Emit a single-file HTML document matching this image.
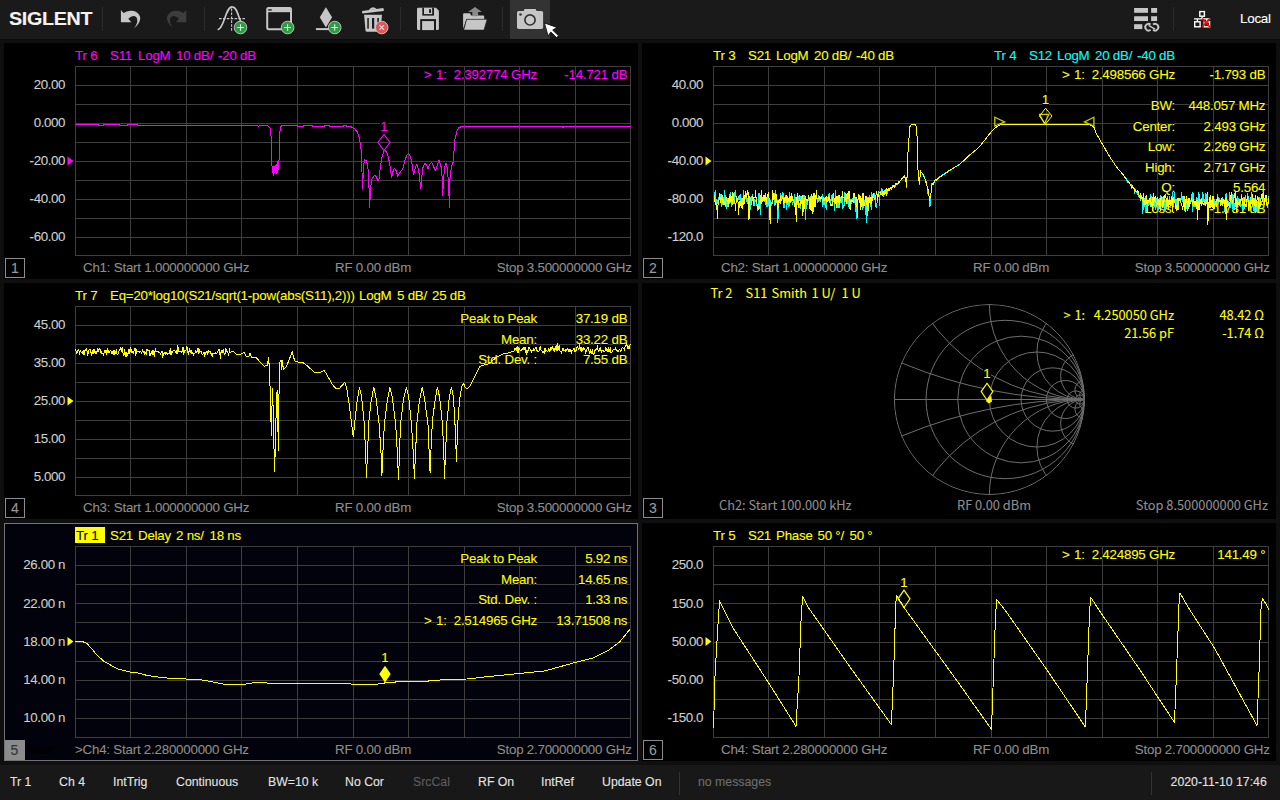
<!DOCTYPE html><html><head><meta charset="utf-8"><title>SIGLENT VNA</title><style>
*{box-sizing:border-box;margin:0;padding:0}
html,body{width:1280px;height:800px;overflow:hidden;background:#0f0f0f;}
body{font-family:"Liberation Sans",sans-serif;font-size:13.33px;letter-spacing:-0.22px;color:#ccc;position:relative;line-height:16px;-webkit-text-stroke:0.1px currentColor;}
#top{position:absolute;left:0;top:0;width:1280px;height:39px;background:#1a1a1a}
#status{position:absolute;left:0;top:765px;width:1280px;height:35px;background:#181818}
.p{position:absolute;background:#000;overflow:hidden}
.p svg{position:absolute;left:0;top:0}
.t{position:absolute;white-space:pre;height:16px;text-shadow:1px 0 #000,-1px 0 #000,0 1px #000,0 -1px #000}
.r{text-align:right}
.ml{background:#000;width:7.6px;height:15.4px;text-shadow:none;letter-spacing:0;overflow:hidden}
.num{position:absolute;left:1px;width:20px;height:20px;border:1px solid #8c8c8c;color:#9a9a9a;text-align:center;line-height:18px;font-size:14px;letter-spacing:0}
.ax{color:#cfcfcf;letter-spacing:-0.4px}
.bt{color:#8e8e8e}
.os{font-family:"Noto Sans CJK SC","DejaVu Sans",sans-serif;letter-spacing:0;font-size:12.8px}
.st{position:absolute;top:9px;color:#e4e4e4;white-space:pre;font-size:12.3px;letter-spacing:0}
</style></head><body>
<div id="top"><svg width="1280" height="39" viewBox="0 0 1280 39" style="position:absolute;left:0;top:0"><line x1="102.5" y1="7" x2="102.5" y2="31" stroke="#2b2b2b" stroke-width="1"/><line x1="204.5" y1="7" x2="204.5" y2="31" stroke="#2b2b2b" stroke-width="1"/><line x1="400.5" y1="7" x2="400.5" y2="31" stroke="#2b2b2b" stroke-width="1"/><line x1="502.5" y1="7" x2="502.5" y2="31" stroke="#2b2b2b" stroke-width="1"/><line x1="1173.5" y1="7" x2="1173.5" y2="31" stroke="#2b2b2b" stroke-width="1"/><rect x="510" y="0" width="40" height="39" fill="#333333"/><path d="M120.9,10 L120.9,22.2 L131.3,22.2 L128.3,18.7 Q132.8,14.4 136.4,17.2 Q139.2,21 134.2,28.3 Q141.6,21.5 140,16.4 Q137.6,10.6 130.6,10.8 Q126.2,11.2 123.6,13.1 Z" fill="#c6c6c6"/><g transform="translate(307.2,0) scale(-1,1)"><path d="M120.9,10 L120.9,22.2 L131.3,22.2 L128.3,18.7 Q132.8,14.4 136.4,17.2 Q139.2,21 134.2,28.3 Q141.6,21.5 140,16.4 Q137.6,10.6 130.6,10.8 Q126.2,11.2 123.6,13.1 Z" fill="#3d3d3d"/></g><path d="M218.4,29.4 C224.5,27.5 225.5,6.8 232,6.8 C237.5,6.8 238,17 241,22" fill="none" stroke="#c6c6c6" stroke-width="1.7" stroke-linecap="round"/><path d="M219,18.6 H245 M231.6,8.6 V32" fill="none" stroke="#c6c6c6" stroke-width="1.1" stroke-dasharray="2.6,1.3"/><circle cx="240.5" cy="27.5" r="6.3" fill="#2e9b45" stroke="#c9c9c9" stroke-width="0.9"/><path d="M237.2,27.5 L243.8,27.5 M240.5,24.2 L240.5,30.8" stroke="#e2efe4" stroke-width="1.05" fill="none"/><rect x="267.2" y="8" width="23.8" height="21.2" rx="1.6" fill="#1a1a1a" stroke="#c6c6c6" stroke-width="2"/><rect x="267" y="7.6" width="24.2" height="4.6" fill="#c6c6c6"/><rect x="268.2" y="9.2" width="3.6" height="1.4" fill="#222"/><circle cx="287.6" cy="27.5" r="6.3" fill="#2e9b45" stroke="#c9c9c9" stroke-width="0.9"/><path d="M284.3,27.5 L290.90000000000003,27.5 M287.6,24.2 L287.6,30.8" stroke="#e2efe4" stroke-width="1.05" fill="none"/><polygon points="325.9,7.2 332.1,17.3 325.9,27.6 319.8,17.3" fill="#c6c6c6"/><rect x="315.9" y="28.1" width="14" height="2" fill="#c6c6c6"/><circle cx="334.7" cy="27.5" r="6.3" fill="#2e9b45" stroke="#c9c9c9" stroke-width="0.9"/><path d="M331.4,27.5 L338.0,27.5 M334.7,24.2 L334.7,30.8" stroke="#e2efe4" stroke-width="1.05" fill="none"/><path d="M362.2,10.9 L383.2,8.1 Q384.3,9.5 383.7,10.9 L362.6,13.6 Q361.5,12.2 362.2,10.9 Z" fill="#c6c6c6"/><path d="M368.6,10.2 Q372.6,4.8 376.8,9.2 Z" fill="#c6c6c6"/><path d="M364.1,14.8 H382 L380.6,30.4 Q380.4,31.7 379,31.7 H367 Q365.7,31.7 365.5,30.4 Z" fill="#c6c6c6"/><rect x="367.3" y="18" width="1.5" height="10.6" fill="#1a1a1a"/><rect x="372" y="18" width="2.2" height="10.6" fill="#1a1a1a"/><rect x="377.3" y="18" width="1.6" height="10.6" fill="#1a1a1a"/><circle cx="381.7" cy="27.5" r="6.3" fill="#e05656" stroke="#c9c9c9" stroke-width="0.9"/><path d="M379.4,25.2 L384.0,29.8 M384.0,25.2 L379.4,29.8" stroke="#f4dcdc" stroke-width="1.1" fill="none"/><path d="M418.4,7.8 H436 L438.9,10.8 V28.8 Q438.9,30.1 437.6,30.1 H418.4 Q417,30.1 417,28.8 V9.2 Q417,7.8 418.4,7.8 Z" fill="#c6c6c6"/><rect x="422.3" y="7.8" width="11.7" height="7.8" fill="#1a1a1a"/><rect x="424" y="7.8" width="8.2" height="6.3" fill="#c6c6c6"/><rect x="429.1" y="9.2" width="1.9" height="3.7" fill="#1a1a1a"/><rect x="420.2" y="19.1" width="15.8" height="11" fill="#1a1a1a"/><rect x="422.1" y="21.1" width="11.9" height="9" fill="#c6c6c6"/><path d="M463.1,14.2 Q463.1,13.3 464,13.3 H470 L471.2,15.6 H483.4 Q484.2,15.6 484.2,16.4 V19 H466.4 L463.1,29 Z" fill="#c6c6c6"/><polygon points="466.6,19.3 487.1,19.3 484,30.1 463.7,30.1" fill="#c6c6c6" stroke="#1a1a1a" stroke-width="0.6"/><polygon points="475,6.9 482,11.9 478.1,11.9 478.1,16.2 472.3,16.2 472.3,11.9 468,11.9" fill="#8a8a8a"/><rect x="517" y="10.9" width="26.1" height="18" rx="1.6" fill="#c6c6c6"/><path d="M523.6,11 L524.6,9 H535.6 L536.6,11 Z" fill="#c6c6c6"/><circle cx="530" cy="19.9" r="5.1" fill="#c9c9c9" stroke="#333" stroke-width="1.7"/><circle cx="520.5" cy="14.5" r="1.3" fill="#333"/><polygon points="544.4,22.9 556.9,27.4 552.7,30.1 558.5,35.7 556.6,37.6 550.8,32 548.1,36" fill="#ffffff" stroke="#111" stroke-width="0.9" stroke-linejoin="round"/><rect x="1134.1" y="8" width="13.9" height="4.8" fill="#c6c6c6"/><rect x="1151.1" y="8" width="6" height="4.8" fill="#c6c6c6"/><rect x="1134.1" y="16.25" width="13.9" height="4.8" fill="#c6c6c6"/><rect x="1151.1" y="16.25" width="6" height="4.8" fill="#c6c6c6"/><rect x="1134.1" y="24.2" width="8.2" height="4.9" fill="#c6c6c6"/><path d="M1150.6,24.6 A3.3,3.3 0 1 0 1150.6,29.8 M1153,29.8 A3.3,3.3 0 1 0 1153,24.6" fill="none" stroke="#c6c6c6" stroke-width="1.9"/><path d="M1148.6,25.3 L1155,29.1" stroke="#c6c6c6" stroke-width="1.5"/><g fill="none" stroke="#ffffff" stroke-width="1.4"><rect x="1199.8" y="11.6" width="4.6" height="4.6"/><rect x="1194.7" y="21.8" width="5.4" height="5"/><rect x="1204.2" y="21.8" width="5.4" height="5"/><path d="M1202.1,16.4 V18.9 M1194,18.9 H1210.2 M1197.4,18.9 V21.6 M1206.9,18.9 V21.6"/></g><path d="M1202,18.6 L1210,27 M1210,18.6 L1202,27" stroke="#ff0000" stroke-width="1.8" fill="none"/></svg><div style="position:absolute;left:9px;top:7px;font-weight:bold;font-size:18px;line-height:24px;color:#f6f3ee;letter-spacing:-0.3px;transform:scaleX(1.095);transform-origin:0 0;white-space:pre">SIGLENT</div><div style="position:absolute;left:1240px;top:10.5px;font-size:13.33px;color:#ffffff;white-space:pre">Local</div></div><div style="position:absolute;left:0;top:39px;width:1280px;height:1px;background:#0b0b0b"></div>
<div class="p" style="left:4px;top:43px;width:634px;height:236px;background:#000;"><svg width="634" height="236" viewBox="0 0 634 236" style="left:0px;top:0px"><g fill="#3e3e3e"><rect x="71" y="23" width="1" height="190"/><rect x="126" y="23" width="1" height="190"/><rect x="182" y="23" width="1" height="190"/><rect x="237" y="23" width="1" height="190"/><rect x="293" y="23" width="1" height="190"/><rect x="349" y="23" width="1" height="190"/><rect x="404" y="23" width="1" height="190"/><rect x="460" y="23" width="1" height="190"/><rect x="515" y="23" width="1" height="190"/><rect x="571" y="23" width="1" height="190"/><rect x="626" y="23" width="1" height="190"/><rect x="71" y="23" width="556" height="1"/><rect x="71" y="42" width="556" height="1"/><rect x="71" y="61" width="556" height="1"/><rect x="71" y="80" width="556" height="1"/><rect x="71" y="99" width="556" height="1"/><rect x="71" y="118" width="556" height="1"/><rect x="71" y="137" width="556" height="1"/><rect x="71" y="156" width="556" height="1"/><rect x="71" y="175" width="556" height="1"/><rect x="71" y="194" width="556" height="1"/><rect x="71" y="212" width="556" height="1"/></g></svg><div style="position:absolute;left:0px;top:0px;width:634px;height:236px"><div class="t" style="top:5.4px;left:71.0px;color:#ff00ff;">Tr 6</div><div class="t" style="top:5.4px;left:106.0px;color:#ff00ff;">S11</div><div class="t" style="top:5.4px;left:134.0px;color:#ff00ff;">LogM</div><div class="t" style="top:5.4px;left:172.0px;color:#ff00ff;">10 dB/</div><div class="t" style="top:5.4px;left:214.0px;color:#ff00ff;">-20 dB</div><div class="t ax r" style="top:34.3px;right:573.0px;">20.00</div><div class="t ax r" style="top:72.3px;right:573.0px;">0.000</div><div class="t ax r" style="top:110.3px;right:573.0px;">-20.00</div><div class="t ax r" style="top:148.3px;right:573.0px;">-40.00</div><div class="t ax r" style="top:186.3px;right:573.0px;">-60.00</div><div class="t bt" style="top:217.4px;left:79.0px;">Ch1: Start 1.000000000 GHz</div><div class="t bt" style="top:217.4px;left:331.0px;">RF 0.00 dBm</div><div class="t bt r" style="top:217.4px;right:6.3px;">Stop 3.500000000 GHz</div><div class="t r" style="top:24.4px;right:101.0px;color:#ff00ff;"><span style="letter-spacing:0.9px">&gt;</span> 1:  2.392774 GHz</div><div class="t r" style="top:24.4px;right:10.7px;color:#ff00ff;">-14.721 dB</div><div class="t ml" style="left:376.2px;top:76.0px;color:#ff00ff">1</div><div class="num" style="top:215px">1</div></div><svg width="634" height="236" viewBox="0 0 634 236" style="left:0px;top:0px"><polyline points="71.0,81.5 94.0,81.5 94.5,82.5 99.0,82.5 99.5,81.5 115.0,81.5 115.5,82.5 123.0,82.5 123.5,81.5 133.0,81.5 133.8,83.0 134.6,82.5 253.5,82.5 254.3,83.6 255.2,82.5 262.5,82.5 264.5,83.2 266.0,85.0 266.8,88.0 267.4,102.0 267.6,120.5 268.4,125.0 268.9,129.0 269.5,132.6 270.0,123.0 270.6,130.0 271.2,122.0 271.8,129.0 272.4,121.0 273.0,130.5 273.6,120.0 274.2,117.0 274.7,127.0 275.1,115.0 275.4,104.0 275.8,92.0 276.2,84.5 277.5,82.8 279.0,82.5 293.5,82.5 294.0,83.5 299.5,83.5 300.0,82.5 308.0,82.5 308.5,83.5 320.0,83.5 321.0,82.5 325.0,82.5 326.0,83.5 339.0,83.5 340.0,82.5 342.0,82.5 343.0,83.5 346.6,83.5 350.4,85.6 353.5,89.2 355.4,95.0 356.2,100.0 357.2,107.0 357.8,122.0 358.5,145.8 359.1,133.0 359.6,122.0 360.8,116.8 362.6,118.0 364.4,128.0 365.0,145.0 365.6,164.8 366.2,153.0 366.8,143.5 368.0,136.3 370.3,132.2 372.1,133.4 373.9,137.5 375.0,136.3 376.3,124.5 378.0,113.8 380.4,107.3 382.8,109.0 384.6,115.0 386.4,125.7 387.8,134.6 388.7,129.2 390.5,125.1 392.3,128.0 393.8,133.4 395.9,129.8 398.8,125.7 400.6,118.5 402.7,112.6 404.4,110.2 406.5,113.8 408.3,122.1 409.5,131.6 411.0,125.7 412.8,121.5 414.6,126.9 416.0,138.7 416.9,145.8 417.8,134.0 419.0,124.5 420.8,120.3 422.6,122.1 424.0,125.7 425.8,121.5 427.7,119.1 429.7,123.9 431.5,127.4 433.2,122.7 435.0,117.4 436.8,121.5 438.0,132.8 438.6,153.0 439.8,132.8 440.7,123.3 442.1,120.3 443.6,126.9 444.8,148.2 445.5,164.8 446.0,136.3 446.9,128.0 448.3,120.9 449.5,118.5 450.5,98.4 452.0,92.4 453.4,86.5 455.2,84.4 458.2,83.5 466.0,83.4 558.0,83.4 559.0,84.5 560.0,83.4 627.0,83.4" fill="none" stroke="#ff00ff" stroke-width="1.0" stroke-linejoin="round" shape-rendering="crispEdges"/><polygon points="63.5,113.5 69.5,118.0 63.5,122.5" fill="#ff00ff"/><polygon points="380.0,107.5 386.0,99.5 380.0,91.5 374.0,99.5" fill="none" stroke="#ff00ff" stroke-width="1.2"/></svg></div>
<div class="p" style="left:642px;top:43px;width:634px;height:236px;background:#000;"><svg width="634" height="236" viewBox="0 0 634 236" style="left:0px;top:0px"><g fill="#3e3e3e"><rect x="71" y="23" width="1" height="190"/><rect x="126" y="23" width="1" height="190"/><rect x="182" y="23" width="1" height="190"/><rect x="237" y="23" width="1" height="190"/><rect x="293" y="23" width="1" height="190"/><rect x="349" y="23" width="1" height="190"/><rect x="404" y="23" width="1" height="190"/><rect x="460" y="23" width="1" height="190"/><rect x="515" y="23" width="1" height="190"/><rect x="571" y="23" width="1" height="190"/><rect x="626" y="23" width="1" height="190"/><rect x="71" y="23" width="556" height="1"/><rect x="71" y="42" width="556" height="1"/><rect x="71" y="61" width="556" height="1"/><rect x="71" y="80" width="556" height="1"/><rect x="71" y="99" width="556" height="1"/><rect x="71" y="118" width="556" height="1"/><rect x="71" y="137" width="556" height="1"/><rect x="71" y="156" width="556" height="1"/><rect x="71" y="175" width="556" height="1"/><rect x="71" y="194" width="556" height="1"/><rect x="71" y="212" width="556" height="1"/></g></svg><div style="position:absolute;left:0px;top:0px;width:634px;height:236px"><div class="t" style="top:5.4px;left:71.0px;color:#ffff00;">Tr 3</div><div class="t" style="top:5.4px;left:106.0px;color:#ffff00;">S21</div><div class="t" style="top:5.4px;left:134.0px;color:#ffff00;">LogM</div><div class="t" style="top:5.4px;left:172.0px;color:#ffff00;">20 dB/</div><div class="t" style="top:5.4px;left:214.0px;color:#ffff00;">-40 dB</div><div class="t" style="top:5.4px;left:352.0px;color:#00ffff;">Tr 4</div><div class="t" style="top:5.4px;left:387.0px;color:#00ffff;">S12</div><div class="t" style="top:5.4px;left:415.0px;color:#00ffff;">LogM</div><div class="t" style="top:5.4px;left:453.0px;color:#00ffff;">20 dB/</div><div class="t" style="top:5.4px;left:495.0px;color:#00ffff;">-40 dB</div><div class="t ax r" style="top:34.3px;right:573.0px;">40.00</div><div class="t ax r" style="top:72.3px;right:573.0px;">0.000</div><div class="t ax r" style="top:110.3px;right:573.0px;">-40.00</div><div class="t ax r" style="top:148.3px;right:573.0px;">-80.00</div><div class="t ax r" style="top:186.3px;right:573.0px;">-120.0</div><div class="t bt" style="top:217.4px;left:79.0px;">Ch2: Start 1.000000000 GHz</div><div class="t bt" style="top:217.4px;left:331.0px;">RF 0.00 dBm</div><div class="t bt r" style="top:217.4px;right:6.3px;">Stop 3.500000000 GHz</div><div class="t r" style="top:24.4px;right:101.0px;color:#ffff00;"><span style="letter-spacing:0.9px">&gt;</span> 1:  2.498566 GHz</div><div class="t r" style="top:24.4px;right:10.7px;color:#ffff00;">-1.793 dB</div><div class="t ml" style="left:399.8px;top:49.4px;color:#ffff00">1</div><div class="t r" style="top:55.4px;right:101.0px;color:#ffff00;">BW:</div><div class="t r" style="top:55.4px;right:10.7px;color:#ffff00;">448.057 MHz</div><div class="t r" style="top:76.4px;right:101.0px;color:#ffff00;">Center:</div><div class="t r" style="top:76.4px;right:10.7px;color:#ffff00;">2.493 GHz</div><div class="t r" style="top:96.4px;right:101.0px;color:#ffff00;">Low:</div><div class="t r" style="top:96.4px;right:10.7px;color:#ffff00;">2.269 GHz</div><div class="t r" style="top:117.4px;right:101.0px;color:#ffff00;">High:</div><div class="t r" style="top:117.4px;right:10.7px;color:#ffff00;">2.717 GHz</div><div class="t r" style="top:137.4px;right:101.0px;color:#ffff00;">Q:</div><div class="t r" style="top:137.4px;right:10.7px;color:#ffff00;">5.564</div><div class="t r" style="top:158.4px;right:101.0px;color:#ffff00;">Loss:</div><div class="t r" style="top:158.4px;right:10.7px;color:#ffff00;">-1.781 dB</div><div class="num" style="top:215px">2</div></div><svg width="634" height="236" viewBox="0 0 634 236" style="left:0px;top:0px"><polyline points="72.0,153.2 72.6,155.5 73.1,147.6 73.7,161.9 74.2,160.1 74.8,156.6 75.3,158.6 75.9,160.3 76.4,155.1 77.0,153.7 77.6,150.1 78.1,156.0 78.7,151.6 79.2,152.0 79.8,164.0 80.3,159.5 80.9,161.9 81.4,154.3 82.0,155.6 82.6,147.6 83.1,164.2 83.7,152.7 84.2,160.9 84.8,165.4 85.3,162.6 85.9,155.1 86.4,158.2 87.0,160.9 87.6,158.2 88.1,149.0 88.7,152.6 89.2,163.6 89.8,154.3 90.3,162.0 90.9,159.0 91.4,154.5 92.0,161.1 92.6,153.1 93.1,148.0 93.7,147.6 94.2,157.1 94.8,159.4 95.3,157.1 95.9,157.5 96.4,153.3 97.0,157.4 97.6,155.0 98.1,151.5 98.7,160.3 99.2,156.8 99.8,156.6 100.3,160.1 100.9,163.1 101.4,147.6 102.0,157.0 102.6,158.6 103.1,153.1 103.7,151.3 104.2,158.9 104.8,150.6 105.3,160.9 105.9,160.8 106.4,159.4 107.0,156.9 107.6,157.6 108.1,166.7 108.7,155.8 109.2,153.3 109.8,161.8 110.3,151.4 110.9,154.3 111.4,162.9 112.0,155.8 112.6,162.9 113.1,158.1 113.7,157.3 114.2,159.8 114.8,162.6 115.3,164.7 115.9,167.6 116.4,154.8 117.0,150.2 117.6,161.6 118.1,160.4 118.7,171.1 119.2,155.3 119.8,155.5 120.3,154.9 120.9,157.4 121.4,154.1 122.0,154.8 122.6,158.2 123.1,157.0 123.7,160.8 124.2,163.2 124.8,154.2 125.3,155.1 125.9,164.1 126.4,158.5 127.0,155.5 127.6,165.3 128.1,158.8 128.7,157.8 129.2,163.1 129.8,161.1 130.3,159.3 130.9,153.9 131.4,153.0 132.0,155.2 132.6,162.4 133.1,147.6 133.7,151.5 134.2,158.8 134.8,156.4 135.3,157.1 135.9,180.1 136.4,163.8 137.0,157.8 137.6,160.0 138.1,157.7 138.7,150.8 139.2,157.4 139.8,153.5 140.3,149.0 140.9,154.5 141.4,150.5 142.0,165.2 142.6,154.8 143.1,159.5 143.7,152.1 144.2,156.8 144.8,167.0 145.3,153.8 145.9,157.2 146.4,158.0 147.0,163.7 147.6,149.9 148.1,160.2 148.7,154.9 149.2,153.7 149.8,158.0 150.3,160.7 150.9,161.2 151.4,157.0 152.0,156.6 152.6,151.6 153.1,160.9 153.7,154.3 154.2,161.2 154.8,157.3 155.3,162.0 155.9,158.6 156.4,153.3 157.0,160.1 157.6,160.7 158.1,165.7 158.7,153.9 159.2,158.2 159.8,158.7 160.3,163.2 160.9,160.1 161.4,152.9 162.0,160.3 162.6,152.9 163.1,156.3 163.7,177.0 164.2,159.2 164.8,158.7 165.3,161.3 165.9,159.2 166.4,153.4 167.0,154.7 167.6,156.3 168.1,153.6 168.7,154.4 169.2,156.7 169.8,154.4 170.3,154.5 170.9,164.3 171.4,156.6 172.0,156.0 172.6,155.6 173.1,155.4 173.7,158.0 174.2,155.0 174.8,153.4 175.3,159.5 175.9,157.4 176.4,152.9 177.0,158.5 177.6,153.5 178.1,159.1 178.7,154.1 179.2,154.0 179.8,153.7 180.3,151.6 180.9,163.7 181.4,154.1 182.0,162.2 182.6,157.5 183.1,154.2 183.7,161.9 184.2,166.9 184.8,160.6 185.3,154.8 185.9,157.9 186.4,157.9 187.0,151.2 187.6,150.9 188.1,160.0 188.7,162.0 189.2,152.5 189.8,157.7 190.3,156.0 190.9,151.4 191.4,154.2 192.0,158.9 192.6,167.4 193.1,154.2 193.7,147.6 194.2,161.9 194.8,157.5 195.3,154.0 195.9,164.8 196.4,153.9 197.0,165.1 197.6,163.4 198.1,158.8 198.7,154.8 199.2,156.5 199.8,159.6 200.3,154.9 200.9,166.1 201.4,162.6 202.0,163.4 202.6,149.4 203.1,152.4 203.7,158.3 204.2,152.2 204.8,158.0 205.3,161.0 205.9,150.6 206.4,160.3 207.0,164.2 207.6,152.7 208.1,157.1 208.7,161.7 209.2,161.0 209.8,156.5 210.3,155.8 210.9,157.8 211.4,156.6 212.0,150.7 212.6,155.3 213.1,161.3 213.7,156.8 214.2,176.0 214.8,154.6 215.3,157.7 215.9,157.6 216.4,155.9 217.0,156.2 217.6,159.5 218.1,160.5 218.7,160.2 219.2,157.4 219.8,160.2 220.3,160.1 220.9,166.4 221.4,158.8 222.0,156.9 222.6,162.0 223.1,163.1 223.7,158.8 224.2,179.3 224.8,164.9 225.3,157.3 225.9,154.1 226.4,156.0 227.0,159.1 227.6,152.6 228.1,159.4 228.7,159.1 229.2,167.1 229.8,149.7 230.3,154.8 230.9,151.6 231.4,154.3 232.0,150.0 232.6,151.9 233.1,155.0 233.7,163.3 234.2,164.5 234.8,161.2 235.3,157.5 235.5,154.1 235.9,153.3 236.4,148.3 237.0,154.4 237.6,163.0 238.1,149.9 238.7,151.7 239.2,145.7 239.8,151.7 240.3,148.2 240.9,146.6 241.4,153.5 242.0,148.2 242.6,150.0 243.1,146.3 243.7,148.8 244.2,146.0 244.2,148.8 244.8,149.7 245.3,150.1 245.9,146.6 246.4,145.6 247.0,145.7 247.6,145.7 248.1,145.5 248.7,145.3 249.2,145.0 249.8,145.8 250.3,142.9 250.9,143.8 251.4,143.4 252.0,141.8 252.6,142.5 253.0,144.7 253.1,143.1 253.7,141.4 254.2,140.1 254.8,140.4 255.3,141.2 255.9,140.9 256.4,138.8 257.0,139.9 257.6,138.9 258.1,137.8 258.2,138.0 258.7,137.2 259.2,137.0 259.8,135.8 260.3,136.0 260.9,134.8 261.4,133.8 262.0,133.3 262.6,133.0 262.6,132.9 263.1,134.7 263.7,136.3 263.9,136.9 264.2,141.3 264.7,144.8 264.8,143.0 265.3,123.8 265.6,114.8 265.9,110.8 266.4,103.1 267.0,95.5 267.6,88.2 267.9,83.6 268.1,83.3 268.7,82.6 269.2,81.9 269.6,81.4 269.8,81.4 270.3,81.4 270.9,81.4 271.4,81.4 272.0,81.4 272.6,81.4 273.1,81.4 273.1,81.4 273.7,82.2 274.2,83.1 274.8,83.9 274.9,84.1 275.3,115.2 275.4,120.1 275.9,125.7 276.4,132.4 276.6,134.2 277.0,137.5 277.5,141.2 277.6,141.0 278.1,132.7 278.4,127.8 278.7,128.2 279.2,129.1 279.8,129.2 280.3,130.7 280.9,131.5 281.0,131.1 281.4,132.4 282.0,133.5 282.6,134.9 283.1,136.1 283.6,138.3 283.7,137.8 284.2,138.6 284.8,141.8 285.3,145.1 285.9,150.2 286.2,146.9 286.4,148.0 287.0,152.3 287.6,161.6 288.0,163.7 288.1,159.9 288.7,150.5 289.2,149.8 289.8,142.4 289.8,140.5 290.3,141.8 290.9,141.3 291.4,140.5 292.0,138.7 292.4,139.2 292.6,138.4 293.1,138.2 293.7,136.7 294.2,137.7 294.8,136.5 295.3,135.6 295.9,136.1 296.4,135.2 296.8,134.5 297.0,135.0 297.6,133.6 298.1,133.9 298.7,133.8 299.2,133.3 299.8,132.7 300.3,131.9 300.9,132.0 301.4,131.7 302.0,131.0 302.6,131.0 303.1,130.4 303.7,129.9 304.2,129.7 304.8,129.1 305.3,129.1 305.5,128.8 305.9,128.6 306.4,128.4 307.0,127.9 307.6,127.3 308.1,127.5 308.7,126.7 309.2,126.3 309.8,126.3 310.3,125.8 310.9,125.4 311.4,125.2 312.0,124.7 312.6,124.6 313.1,124.1 313.7,123.8 314.2,123.4 314.8,123.2 315.3,122.9 315.9,122.5 316.4,122.1 317.0,121.8 317.6,121.6 317.8,121.5 318.1,121.0 318.7,120.4 319.2,119.9 319.8,119.5 320.3,118.9 320.9,118.4 321.4,117.9 322.0,117.3 322.6,116.8 323.1,116.3 323.7,115.7 324.2,115.2 324.8,114.7 325.3,114.1 325.9,113.6 326.4,113.1 326.5,113.0 327.0,112.6 327.6,112.1 328.1,111.6 328.7,111.2 329.2,110.7 329.8,110.3 330.3,109.8 330.9,109.4 331.4,108.9 332.0,108.4 332.6,108.0 333.1,107.5 333.7,107.0 334.2,106.6 334.8,106.1 335.3,105.6 335.9,105.2 336.4,104.7 337.0,104.3 337.6,103.5 338.1,102.8 338.7,102.2 339.2,101.5 339.8,100.8 340.3,100.1 340.9,99.4 341.4,98.7 342.0,98.0 342.6,97.3 343.1,96.6 343.7,95.9 344.0,95.5 344.2,95.2 344.8,94.5 345.3,93.8 345.9,93.1 346.4,92.4 347.0,91.8 347.6,91.1 348.1,90.4 348.7,89.7 349.2,89.0 349.8,88.3 350.3,87.6 350.9,86.9 351.0,86.7 351.4,86.4 352.0,86.0 352.6,85.5 353.1,85.1 353.7,84.6 354.2,84.2 354.8,83.8 355.3,83.3 355.9,82.9 356.2,82.6 356.4,82.5 357.0,82.4 357.6,82.2 358.1,82.0 358.7,81.9 359.2,81.7 359.8,81.5 359.9,81.5 360.3,81.5 360.9,81.5 361.4,81.5 362.0,81.5 362.6,81.5 363.1,81.5 363.7,81.5 364.2,81.5 364.8,81.5 365.3,81.5 365.9,81.5 366.4,81.5 367.0,81.5 367.6,81.5 368.1,81.5 368.7,81.5 369.2,81.5 369.8,81.5 370.3,81.5 370.9,81.5 371.4,81.5 372.0,81.5 372.6,81.5 373.1,81.5 373.7,81.5 374.2,81.5 374.8,81.5 375.3,81.5 375.9,81.5 376.4,81.5 377.0,81.5 377.6,81.5 378.1,81.5 378.7,81.5 379.2,81.5 379.8,81.5 380.3,81.5 380.9,81.5 381.4,81.5 382.0,81.5 382.6,81.5 383.1,81.5 383.7,81.5 384.2,81.5 384.8,81.5 385.3,81.5 385.9,81.5 386.4,81.5 387.0,81.5 387.6,81.5 388.1,81.5 388.7,81.5 389.2,81.5 389.8,81.5 390.3,81.5 390.9,81.5 391.4,81.5 392.0,81.5 392.6,81.5 393.1,81.5 393.7,81.5 394.2,81.5 394.8,81.5 395.3,81.5 395.9,81.5 396.4,81.5 397.0,81.5 397.6,81.5 398.1,81.5 398.7,81.5 399.2,81.5 399.8,81.5 400.3,81.5 400.9,81.5 401.4,81.5 402.0,81.5 402.6,81.5 403.1,81.5 403.7,81.5 404.2,81.5 404.8,81.5 405.3,81.5 405.9,81.5 406.4,81.5 407.0,81.5 407.6,81.5 408.1,81.5 408.7,81.5 409.2,81.5 409.8,81.5 410.3,81.5 410.9,81.5 411.4,81.5 412.0,81.5 412.6,81.5 413.1,81.5 413.7,81.5 414.2,81.5 414.8,81.5 415.3,81.5 415.9,81.5 416.4,81.5 417.0,81.5 417.6,81.5 418.1,81.5 418.7,81.5 419.2,81.5 419.8,81.5 420.3,81.5 420.9,81.5 421.4,81.5 422.0,81.5 422.6,81.5 423.1,81.5 423.7,81.5 424.2,81.5 424.8,81.5 425.3,81.5 425.9,81.5 426.4,81.5 427.0,81.5 427.6,81.5 428.1,81.5 428.7,81.5 429.2,81.5 429.8,81.5 430.3,81.5 430.9,81.5 431.4,81.5 432.0,81.5 432.6,81.5 433.1,81.5 433.7,81.5 434.2,81.5 434.8,81.5 435.3,81.5 435.9,81.5 436.4,81.5 437.0,81.5 437.6,81.5 438.1,81.5 438.7,81.5 439.2,81.5 439.8,81.5 440.3,81.5 440.9,81.5 441.4,81.5 442.0,81.5 442.6,81.5 443.1,81.5 443.7,81.5 444.2,81.5 444.8,81.5 445.3,81.5 445.9,81.5 446.4,81.5 447.0,81.5 447.4,81.5 447.6,81.6 448.1,81.9 448.7,82.2 449.2,82.4 449.8,82.7 450.3,83.0 450.9,83.3 451.4,83.6 451.8,83.8 452.0,84.4 452.6,85.9 453.1,87.3 453.7,88.8 454.2,90.3 454.4,90.7 454.8,91.4 455.3,92.4 455.9,93.3 456.4,94.3 457.0,95.2 457.6,96.2 458.1,97.1 458.7,98.1 459.2,99.1 459.8,100.0 460.3,101.0 460.5,101.2 460.9,101.9 461.4,102.9 462.0,103.9 462.6,104.9 463.1,105.8 463.7,106.8 464.2,107.8 464.8,108.7 465.3,109.7 465.9,110.7 466.4,111.7 467.0,112.6 467.5,113.5 467.6,113.6 468.1,114.4 468.7,115.3 469.2,116.1 469.8,116.9 470.3,117.8 470.9,118.6 471.4,119.5 472.0,120.2 472.6,121.1 473.1,122.0 473.7,122.7 474.2,123.5 474.5,124.1 474.8,124.5 475.3,125.0 475.9,125.8 476.4,126.4 477.0,127.1 477.6,127.6 478.1,128.2 478.7,128.7 479.2,129.7 479.8,130.3 480.3,131.3 480.9,131.4 481.4,132.3 482.0,133.2 482.6,134.0 483.1,134.2 483.2,134.7 483.7,135.2 484.2,135.7 484.8,137.1 485.3,138.0 485.9,139.2 486.4,138.6 487.0,139.8 487.6,139.9 488.1,141.3 488.7,141.9 489.2,141.9 489.8,145.9 490.2,144.4 490.3,142.6 490.9,143.5 491.4,145.2 492.0,144.8 492.6,150.2 493.1,147.7 493.7,146.8 494.2,149.5 494.8,148.3 495.3,149.0 495.5,149.7 495.9,151.7 496.4,149.5 497.0,154.2 497.6,152.3 498.1,153.1 498.7,157.2 499.2,152.2 499.8,152.8 500.3,158.4 500.9,170.6 501.4,155.7 502.0,163.6 502.6,163.3 503.1,153.1 503.7,160.9 504.2,154.9 504.8,167.5 505.3,163.8 505.9,160.2 506.4,162.3 507.0,159.7 507.6,157.4 508.1,163.3 508.7,151.0 509.2,154.6 509.8,162.1 510.3,155.9 510.9,160.3 511.4,153.0 512.0,155.6 512.6,154.3 513.1,166.5 513.7,163.5 514.2,157.8 514.8,155.1 515.3,161.0 515.9,168.3 516.4,164.1 517.0,159.8 517.6,158.6 518.1,154.4 518.7,152.3 519.2,153.9 519.8,163.2 520.3,154.7 520.9,159.1 521.4,155.2 522.0,163.5 522.6,159.3 523.1,168.2 523.7,157.1 524.2,158.0 524.8,160.4 525.3,153.3 525.9,156.6 526.4,159.1 527.0,160.7 527.6,153.4 528.1,160.8 528.7,158.4 529.2,162.6 529.8,155.8 530.3,149.6 530.9,157.4 531.4,163.5 532.0,159.9 532.6,149.2 533.1,159.2 533.7,156.5 534.2,166.0 534.8,156.0 535.3,163.7 535.9,164.7 536.4,158.6 537.0,157.0 537.6,155.1 538.1,155.2 538.7,157.2 539.2,156.6 539.8,149.4 540.3,158.2 540.9,155.1 541.4,158.6 542.0,155.5 542.6,167.5 543.1,161.0 543.7,160.9 544.2,160.8 544.8,165.3 545.3,156.1 545.9,157.2 546.4,159.8 547.0,160.7 547.6,159.4 548.1,157.1 548.7,158.4 549.2,158.5 549.8,151.4 550.3,168.3 550.9,149.3 551.4,151.8 552.0,164.4 552.6,158.8 553.1,163.6 553.7,161.7 554.2,160.6 554.8,154.0 555.3,156.9 555.9,161.6 556.4,149.2 557.0,159.8 557.6,151.3 558.1,157.7 558.7,156.4 559.2,160.5 559.8,157.8 560.3,149.8 560.9,160.7 561.4,151.9 562.0,159.2 562.6,156.3 563.1,157.9 563.7,150.1 564.2,151.1 564.8,159.3 565.3,159.2 565.9,158.4 566.4,164.5 567.0,164.9 567.6,160.6 568.1,158.7 568.7,161.5 569.2,162.8 569.8,163.2 570.3,159.6 570.9,160.5 571.4,154.3 572.0,156.4 572.6,158.0 573.1,162.4 573.7,158.0 574.2,160.8 574.8,157.0 575.3,165.0 575.9,151.5 576.4,161.0 577.0,154.7 577.6,156.4 578.1,158.6 578.7,161.2 579.2,160.0 579.8,161.8 580.3,154.7 580.9,156.6 581.4,160.3 582.0,158.3 582.6,169.0 583.1,154.8 583.7,153.3 584.2,150.5 584.8,161.3 585.3,160.8 585.9,157.8 586.4,161.2 587.0,158.9 587.6,149.2 588.1,155.5 588.7,165.0 589.2,159.3 589.8,156.6 590.3,165.5 590.9,151.1 591.4,157.3 592.0,164.5 592.6,166.1 593.1,159.3 593.7,161.8 594.2,155.0 594.8,156.0 595.3,164.2 595.9,153.0 596.4,161.3 597.0,156.0 597.6,160.8 598.1,163.6 598.7,163.1 599.2,155.0 599.8,151.8 600.3,165.2 600.9,161.1 601.4,154.6 602.0,166.6 602.6,162.4 603.1,152.1 603.7,157.6 604.2,159.6 604.8,159.3 605.3,158.9 605.9,150.4 606.4,162.2 607.0,168.3 607.6,157.2 608.1,159.2 608.7,161.5 609.2,149.4 609.8,158.6 610.3,153.9 610.9,164.1 611.4,161.1 612.0,167.9 612.6,155.2 613.1,160.4 613.7,159.2 614.2,158.6 614.8,168.9 615.3,169.7 615.9,158.8 616.4,157.8 617.0,153.8 617.6,159.3 618.1,155.5 618.7,163.2 619.2,159.9 619.8,160.0 620.3,156.5 620.9,150.8 621.4,163.2 622.0,155.8 622.6,159.6 623.1,158.2 623.7,153.3 624.2,156.2 624.8,162.2 625.3,164.1 625.9,158.9 626.4,160.1 627.0,153.0" fill="none" stroke="#00ffff" stroke-width="1.0" stroke-linejoin="round" shape-rendering="crispEdges"/><polyline points="72.0,151.8 72.6,158.1 73.1,158.5 73.7,160.9 74.2,162.6 74.8,160.4 75.3,175.6 75.9,162.7 76.4,160.9 77.0,157.4 77.6,150.9 78.1,156.6 78.7,159.9 79.2,151.4 79.8,157.0 80.3,152.7 80.9,159.3 81.4,156.6 82.0,161.5 82.6,159.0 83.1,163.0 83.7,155.1 84.2,157.3 84.8,154.3 85.3,160.4 85.9,160.7 86.4,163.5 87.0,155.3 87.6,160.0 88.1,152.2 88.7,157.1 89.2,153.2 89.8,156.8 90.3,161.9 90.9,149.6 91.4,153.1 92.0,156.6 92.6,159.1 93.1,160.5 93.7,167.4 94.2,155.8 94.8,153.7 95.3,156.3 95.9,155.2 96.4,171.2 97.0,165.2 97.6,158.3 98.1,159.9 98.7,162.3 99.2,155.9 99.8,165.1 100.3,165.4 100.9,156.2 101.4,153.2 102.0,161.8 102.6,152.9 103.1,153.3 103.7,148.9 104.2,151.7 104.8,154.2 105.3,148.7 105.9,147.6 106.4,152.9 107.0,176.8 107.6,153.8 108.1,156.9 108.7,156.6 109.2,157.2 109.8,161.4 110.3,153.4 110.9,157.9 111.4,160.5 112.0,153.7 112.6,154.9 113.1,154.3 113.7,147.6 114.2,157.5 114.8,160.5 115.3,161.8 115.9,165.9 116.4,162.4 117.0,166.6 117.6,157.4 118.1,157.5 118.7,160.1 119.2,147.6 119.8,161.0 120.3,156.9 120.9,155.1 121.4,152.1 122.0,158.0 122.6,155.7 123.1,150.6 123.7,150.5 124.2,160.7 124.8,155.1 125.3,152.7 125.9,151.8 126.4,149.9 127.0,155.0 127.6,160.2 128.1,180.4 128.7,163.0 129.2,159.3 129.8,159.4 130.3,160.4 130.9,147.6 131.4,157.0 132.0,155.9 132.6,151.1 133.1,151.1 133.7,161.7 134.2,151.6 134.8,155.8 135.3,166.7 135.9,158.4 136.4,164.8 137.0,156.9 137.6,156.1 138.1,161.0 138.7,153.2 139.2,157.1 139.8,156.8 140.3,155.8 140.9,153.3 141.4,160.9 142.0,156.6 142.6,159.2 143.1,154.3 143.7,156.2 144.2,159.8 144.8,152.3 145.3,159.4 145.9,154.6 146.4,158.2 147.0,155.2 147.6,158.6 148.1,153.1 148.7,159.2 149.2,156.9 149.8,150.0 150.3,156.4 150.9,157.4 151.4,157.3 152.0,157.7 152.6,159.0 153.1,165.5 153.7,160.2 154.2,178.5 154.8,156.2 155.3,150.5 155.9,158.4 156.4,164.8 157.0,157.4 157.6,152.2 158.1,159.6 158.7,162.1 159.2,153.2 159.8,161.0 160.3,152.5 160.9,172.6 161.4,158.1 162.0,157.7 162.6,165.9 163.1,152.8 163.7,155.8 164.2,157.4 164.8,156.5 165.3,159.0 165.9,157.4 166.4,152.2 167.0,155.2 167.6,157.2 168.1,167.2 168.7,154.3 169.2,167.3 169.8,151.4 170.3,155.7 170.9,170.8 171.4,162.5 172.0,150.2 172.6,161.9 173.1,164.2 173.7,160.4 174.2,147.6 174.8,155.3 175.3,155.1 175.9,155.4 176.4,154.6 177.0,156.2 177.6,153.1 178.1,154.6 178.7,156.3 179.2,153.7 179.8,154.6 180.3,159.0 180.9,156.7 181.4,154.1 182.0,157.9 182.6,156.9 183.1,155.1 183.7,156.2 184.2,153.5 184.8,159.8 185.3,158.4 185.9,157.5 186.4,153.9 187.0,158.0 187.6,154.4 188.1,161.0 188.7,162.1 189.2,161.2 189.8,162.9 190.3,163.0 190.9,155.7 191.4,150.7 192.0,155.3 192.6,158.1 193.1,160.2 193.7,154.4 194.2,164.2 194.8,153.3 195.3,153.5 195.9,159.0 196.4,159.2 197.0,152.3 197.6,161.3 198.1,157.3 198.7,157.1 199.2,155.3 199.8,155.9 200.3,148.3 200.9,154.9 201.4,154.2 202.0,153.8 202.6,158.8 203.1,155.5 203.7,150.6 204.2,160.9 204.8,151.0 205.3,150.5 205.9,155.7 206.4,155.9 207.0,147.6 207.6,163.5 208.1,166.6 208.7,157.2 209.2,157.9 209.8,158.5 210.3,158.2 210.9,157.0 211.4,159.1 212.0,149.7 212.6,154.5 213.1,153.9 213.7,160.7 214.2,163.2 214.8,154.3 215.3,174.6 215.9,156.3 216.4,155.4 217.0,151.4 217.6,159.8 218.1,153.2 218.7,166.5 219.2,162.0 219.8,155.8 220.3,162.7 220.9,150.0 221.4,152.6 222.0,162.7 222.6,160.5 223.1,158.3 223.7,153.7 224.2,155.8 224.8,153.0 225.3,173.0 225.9,155.1 226.4,167.5 227.0,154.9 227.6,155.6 228.1,160.3 228.7,155.1 229.2,154.0 229.8,160.4 230.3,154.1 230.9,153.4 231.4,150.6 232.0,154.9 232.6,156.6 233.1,155.8 233.7,153.3 234.2,151.0 234.8,148.1 235.3,157.6 235.5,153.9 235.9,151.0 236.4,153.4 237.0,149.6 237.6,149.6 238.1,149.7 238.7,151.8 239.2,151.9 239.8,151.5 240.3,152.5 240.9,148.2 241.4,151.1 242.0,147.8 242.6,151.8 243.1,150.5 243.7,147.5 244.2,153.0 244.2,147.7 244.8,145.9 245.3,147.5 245.9,146.9 246.4,147.3 247.0,145.3 247.6,147.1 248.1,145.1 248.7,144.1 249.2,146.9 249.8,144.4 250.3,142.4 250.9,144.4 251.4,143.1 252.0,142.6 252.6,144.7 253.0,141.9 253.1,142.2 253.7,140.5 254.2,140.3 254.8,141.2 255.3,140.4 255.9,141.1 256.4,139.0 257.0,139.3 257.6,139.0 258.1,137.6 258.2,137.8 258.7,137.7 259.2,136.0 259.8,135.3 260.3,135.8 260.9,135.2 261.4,134.3 262.0,133.5 262.6,132.3 262.6,132.6 263.1,135.1 263.7,136.2 263.9,138.1 264.2,140.1 264.7,143.5 264.8,141.5 265.3,124.0 265.6,114.8 265.9,110.8 266.4,103.1 267.0,95.5 267.6,88.2 267.9,83.6 268.1,83.3 268.7,82.6 269.2,81.9 269.6,81.4 269.8,81.4 270.3,81.4 270.9,81.4 271.4,81.4 272.0,81.4 272.6,81.4 273.1,81.4 273.1,81.4 273.7,82.2 274.2,83.1 274.8,83.9 274.9,84.1 275.3,115.3 275.4,119.9 275.9,125.7 276.4,131.7 276.6,133.7 277.0,137.9 277.5,140.9 277.6,140.5 278.1,132.5 278.4,127.9 278.7,128.0 279.2,129.2 279.8,129.5 280.3,130.3 280.9,131.0 281.0,131.2 281.4,132.6 282.0,133.7 282.6,135.0 283.1,136.2 283.6,138.0 283.7,138.1 284.2,140.3 284.8,142.5 285.3,144.7 285.9,145.0 286.2,150.9 286.4,146.9 287.0,153.4 287.6,157.1 288.0,155.0 288.1,154.2 288.7,153.1 289.2,147.7 289.8,143.7 289.8,143.2 290.3,140.8 290.9,141.5 291.4,141.1 292.0,139.1 292.4,139.0 292.6,138.4 293.1,137.0 293.7,136.8 294.2,136.4 294.8,137.4 295.3,136.4 295.9,135.6 296.4,135.4 296.8,134.8 297.0,135.2 297.6,134.5 298.1,133.9 298.7,133.5 299.2,133.1 299.8,132.9 300.3,132.6 300.9,132.1 301.4,131.5 302.0,131.1 302.6,130.5 303.1,130.5 303.7,130.1 304.2,129.8 304.8,129.1 305.3,129.2 305.5,128.8 305.9,128.4 306.4,127.7 307.0,127.8 307.6,128.0 308.1,127.1 308.7,126.9 309.2,126.2 309.8,126.1 310.3,125.7 310.9,125.5 311.4,125.2 312.0,124.9 312.6,124.4 313.1,124.1 313.7,123.9 314.2,123.3 314.8,123.2 315.3,122.8 315.9,122.5 316.4,122.3 317.0,121.9 317.6,121.5 317.8,121.5 318.1,121.1 318.7,120.5 319.2,120.0 319.8,119.4 320.3,118.9 320.9,118.3 321.4,117.9 322.0,117.3 322.6,116.8 323.1,116.2 323.7,115.7 324.2,115.2 324.8,114.7 325.3,114.1 325.9,113.5 326.4,113.0 326.5,113.1 327.0,112.6 327.6,112.1 328.1,111.7 328.7,111.2 329.2,110.7 329.8,110.3 330.3,109.8 330.9,109.3 331.4,108.9 332.0,108.4 332.6,107.9 333.1,107.5 333.7,107.0 334.2,106.6 334.8,106.1 335.3,105.6 335.9,105.2 336.4,104.7 337.0,104.3 337.6,103.6 338.1,102.8 338.7,102.2 339.2,101.5 339.8,100.8 340.3,100.1 340.9,99.4 341.4,98.7 342.0,98.0 342.6,97.3 343.1,96.6 343.7,95.9 344.0,95.5 344.2,95.2 344.8,94.5 345.3,93.8 345.9,93.1 346.4,92.4 347.0,91.7 347.6,91.1 348.1,90.4 348.7,89.7 349.2,89.0 349.8,88.3 350.3,87.6 350.9,86.9 351.0,86.7 351.4,86.4 352.0,86.0 352.6,85.5 353.1,85.1 353.7,84.6 354.2,84.2 354.8,83.8 355.3,83.3 355.9,82.9 356.2,82.6 356.4,82.5 357.0,82.4 357.6,82.2 358.1,82.0 358.7,81.9 359.2,81.7 359.8,81.5 359.9,81.5 360.3,81.5 360.9,81.5 361.4,81.5 362.0,81.5 362.6,81.5 363.1,81.5 363.7,81.5 364.2,81.5 364.8,81.5 365.3,81.5 365.9,81.5 366.4,81.5 367.0,81.5 367.6,81.5 368.1,81.5 368.7,81.5 369.2,81.5 369.8,81.5 370.3,81.5 370.9,81.5 371.4,81.5 372.0,81.5 372.6,81.5 373.1,81.5 373.7,81.5 374.2,81.5 374.8,81.5 375.3,81.5 375.9,81.5 376.4,81.5 377.0,81.5 377.6,81.5 378.1,81.5 378.7,81.5 379.2,81.5 379.8,81.5 380.3,81.5 380.9,81.5 381.4,81.5 382.0,81.5 382.6,81.5 383.1,81.5 383.7,81.5 384.2,81.5 384.8,81.5 385.3,81.5 385.9,81.5 386.4,81.5 387.0,81.5 387.6,81.5 388.1,81.5 388.7,81.5 389.2,81.5 389.8,81.5 390.3,81.5 390.9,81.5 391.4,81.5 392.0,81.5 392.6,81.5 393.1,81.5 393.7,81.5 394.2,81.5 394.8,81.5 395.3,81.5 395.9,81.5 396.4,81.5 397.0,81.5 397.6,81.5 398.1,81.5 398.7,81.5 399.2,81.5 399.8,81.5 400.3,81.5 400.9,81.5 401.4,81.5 402.0,81.5 402.6,81.5 403.1,81.5 403.7,81.5 404.2,81.5 404.8,81.5 405.3,81.5 405.9,81.5 406.4,81.5 407.0,81.5 407.6,81.5 408.1,81.5 408.7,81.5 409.2,81.5 409.8,81.5 410.3,81.5 410.9,81.5 411.4,81.5 412.0,81.5 412.6,81.5 413.1,81.5 413.7,81.5 414.2,81.5 414.8,81.5 415.3,81.5 415.9,81.5 416.4,81.5 417.0,81.5 417.6,81.5 418.1,81.5 418.7,81.5 419.2,81.5 419.8,81.5 420.3,81.5 420.9,81.5 421.4,81.5 422.0,81.5 422.6,81.5 423.1,81.5 423.7,81.5 424.2,81.5 424.8,81.5 425.3,81.5 425.9,81.5 426.4,81.5 427.0,81.5 427.6,81.5 428.1,81.5 428.7,81.5 429.2,81.5 429.8,81.5 430.3,81.5 430.9,81.5 431.4,81.5 432.0,81.5 432.6,81.5 433.1,81.5 433.7,81.5 434.2,81.5 434.8,81.5 435.3,81.5 435.9,81.5 436.4,81.5 437.0,81.5 437.6,81.5 438.1,81.5 438.7,81.5 439.2,81.5 439.8,81.5 440.3,81.5 440.9,81.5 441.4,81.5 442.0,81.5 442.6,81.5 443.1,81.5 443.7,81.5 444.2,81.5 444.8,81.5 445.3,81.5 445.9,81.5 446.4,81.5 447.0,81.5 447.4,81.5 447.6,81.6 448.1,81.9 448.7,82.2 449.2,82.4 449.8,82.7 450.3,83.0 450.9,83.3 451.4,83.6 451.8,83.8 452.0,84.4 452.6,85.9 453.1,87.3 453.7,88.8 454.2,90.3 454.4,90.8 454.8,91.4 455.3,92.4 455.9,93.3 456.4,94.3 457.0,95.2 457.6,96.2 458.1,97.1 458.7,98.1 459.2,99.0 459.8,100.0 460.3,101.0 460.5,101.3 460.9,101.9 461.4,102.9 462.0,103.9 462.6,104.9 463.1,105.8 463.7,106.8 464.2,107.8 464.8,108.7 465.3,109.7 465.9,110.7 466.4,111.7 467.0,112.6 467.5,113.5 467.6,113.6 468.1,114.4 468.7,115.3 469.2,116.1 469.8,116.9 470.3,117.7 470.9,118.6 471.4,119.5 472.0,120.3 472.6,121.2 473.1,122.0 473.7,122.7 474.2,123.7 474.5,124.0 474.8,124.2 475.3,125.0 475.9,125.8 476.4,126.3 477.0,127.0 477.6,127.6 478.1,128.1 478.7,128.8 479.2,129.6 479.8,130.3 480.3,130.9 480.9,131.4 481.4,131.8 482.0,133.0 482.6,134.0 483.1,134.4 483.2,134.5 483.7,135.6 484.2,136.0 484.8,136.6 485.3,137.1 485.9,138.3 486.4,139.0 487.0,139.5 487.6,140.1 488.1,141.4 488.7,141.7 489.2,144.1 489.8,143.9 490.2,144.7 490.3,142.8 490.9,143.8 491.4,144.9 492.0,145.2 492.6,146.7 493.1,147.6 493.7,148.4 494.2,147.9 494.8,148.4 495.3,148.2 495.5,147.4 495.9,149.3 496.4,148.3 497.0,151.6 497.6,153.1 498.1,155.3 498.7,150.6 499.2,154.9 499.8,155.5 500.3,157.1 500.9,155.2 501.4,150.9 502.0,161.7 502.6,157.5 503.1,156.7 503.7,161.1 504.2,152.0 504.8,154.7 505.3,168.8 505.9,157.8 506.4,158.0 507.0,159.5 507.6,157.4 508.1,154.2 508.7,159.5 509.2,163.7 509.8,163.1 510.3,154.6 510.9,167.2 511.4,150.9 512.0,156.5 512.6,154.7 513.1,159.8 513.7,153.0 514.2,162.6 514.8,159.3 515.3,161.6 515.9,154.3 516.4,161.5 517.0,161.7 517.6,157.8 518.1,168.1 518.7,156.8 519.2,154.5 519.8,154.8 520.3,159.0 520.9,164.7 521.4,156.6 522.0,153.4 522.6,158.9 523.1,151.2 523.7,153.0 524.2,157.0 524.8,163.5 525.3,155.5 525.9,162.1 526.4,166.4 527.0,157.4 527.6,161.1 528.1,157.4 528.7,162.8 529.2,154.4 529.8,155.1 530.3,168.8 530.9,155.2 531.4,154.6 532.0,159.3 532.6,156.6 533.1,160.5 533.7,165.8 534.2,161.9 534.8,167.2 535.3,166.6 535.9,155.2 536.4,166.4 537.0,154.6 537.6,157.6 538.1,156.6 538.7,158.3 539.2,160.4 539.8,160.7 540.3,166.6 540.9,166.1 541.4,156.1 542.0,153.3 542.6,159.2 543.1,168.7 543.7,161.1 544.2,153.0 544.8,159.7 545.3,158.2 545.9,167.8 546.4,161.3 547.0,155.2 547.6,163.2 548.1,160.0 548.7,160.6 549.2,156.5 549.8,155.7 550.3,158.6 550.9,161.5 551.4,156.7 552.0,157.8 552.6,161.9 553.1,158.0 553.7,162.7 554.2,163.4 554.8,157.0 555.3,176.7 555.9,157.2 556.4,159.2 557.0,167.0 557.6,156.0 558.1,160.6 558.7,157.3 559.2,162.3 559.8,156.9 560.3,160.4 560.9,159.3 561.4,161.6 562.0,161.5 562.6,159.7 563.1,157.7 563.7,162.3 564.2,156.1 564.8,161.0 565.3,149.2 565.9,181.2 566.4,166.9 567.0,159.5 567.6,164.5 568.1,152.5 568.7,165.0 569.2,157.8 569.8,163.6 570.3,153.2 570.9,164.5 571.4,153.9 572.0,165.7 572.6,160.6 573.1,162.2 573.7,158.7 574.2,163.3 574.8,156.8 575.3,154.9 575.9,158.0 576.4,158.4 577.0,156.6 577.6,158.6 578.1,157.4 578.7,162.3 579.2,159.1 579.8,155.3 580.3,162.5 580.9,156.7 581.4,156.8 582.0,160.4 582.6,163.3 583.1,155.2 583.7,161.4 584.2,176.9 584.8,154.4 585.3,164.0 585.9,163.5 586.4,160.5 587.0,160.6 587.6,163.7 588.1,158.0 588.7,156.9 589.2,149.7 589.8,154.3 590.3,160.5 590.9,158.5 591.4,156.6 592.0,153.8 592.6,154.6 593.1,149.6 593.7,163.4 594.2,156.6 594.8,168.4 595.3,157.6 595.9,158.2 596.4,160.8 597.0,161.7 597.6,159.4 598.1,155.8 598.7,159.8 599.2,155.6 599.8,152.1 600.3,158.2 600.9,163.1 601.4,160.3 602.0,159.0 602.6,155.4 603.1,164.2 603.7,161.7 604.2,163.6 604.8,156.8 605.3,154.3 605.9,153.6 606.4,167.5 607.0,163.6 607.6,159.7 608.1,165.5 608.7,156.0 609.2,160.6 609.8,160.5 610.3,151.6 610.9,163.0 611.4,155.4 612.0,161.3 612.6,156.0 613.1,164.5 613.7,152.3 614.2,164.1 614.8,158.0 615.3,154.9 615.9,153.0 616.4,160.5 617.0,165.7 617.6,163.4 618.1,158.9 618.7,162.1 619.2,151.9 619.8,154.6 620.3,158.7 620.9,151.8 621.4,149.2 622.0,155.0 622.6,161.2 623.1,157.2 623.7,152.4 624.2,152.3 624.8,161.5 625.3,162.4 625.9,161.7 626.4,157.2 627.0,155.5" fill="none" stroke="#ffff00" stroke-width="1.0" stroke-linejoin="round" shape-rendering="crispEdges"/><polygon points="63.5,113.5 69.5,118.0 63.5,122.5" fill="#ffff00"/><polygon points="352.8,74.2 352.8,83.1 362.7,78.9" fill="none" stroke="#cccc00" stroke-width="1.3"/><polygon points="451.9,74.2 451.9,83.1 442.4,78.9" fill="none" stroke="#cccc00" stroke-width="1.3"/><polygon points="397.6,71.3 406.8,71.3 402.5,80.8" fill="none" stroke="#cccc00" stroke-width="1.3"/><polygon points="403.6,65.3 410.0,73.0 403.6,81.0 397.4,73.0" fill="none" stroke="#ffff00" stroke-width="1"/></svg></div>
<div class="p" style="left:4px;top:283px;width:634px;height:236px;background:#000;"><svg width="634" height="236" viewBox="0 0 634 236" style="left:0px;top:0px"><g fill="#3e3e3e"><rect x="71" y="23" width="1" height="190"/><rect x="126" y="23" width="1" height="190"/><rect x="182" y="23" width="1" height="190"/><rect x="237" y="23" width="1" height="190"/><rect x="293" y="23" width="1" height="190"/><rect x="349" y="23" width="1" height="190"/><rect x="404" y="23" width="1" height="190"/><rect x="460" y="23" width="1" height="190"/><rect x="515" y="23" width="1" height="190"/><rect x="571" y="23" width="1" height="190"/><rect x="626" y="23" width="1" height="190"/><rect x="71" y="23" width="556" height="1"/><rect x="71" y="42" width="556" height="1"/><rect x="71" y="61" width="556" height="1"/><rect x="71" y="80" width="556" height="1"/><rect x="71" y="99" width="556" height="1"/><rect x="71" y="118" width="556" height="1"/><rect x="71" y="137" width="556" height="1"/><rect x="71" y="156" width="556" height="1"/><rect x="71" y="175" width="556" height="1"/><rect x="71" y="194" width="556" height="1"/><rect x="71" y="212" width="556" height="1"/></g></svg><div style="position:absolute;left:0px;top:0px;width:634px;height:236px"><div class="t" style="top:5.4px;left:71.0px;color:#ffff00;">Tr 7</div><div class="t" style="top:5.4px;left:106.0px;color:#ffff00;">Eq=20*log10(S21/sqrt(1-pow(abs(S11),2)))</div><div class="t" style="top:5.4px;left:355.0px;color:#ffff00;">LogM</div><div class="t" style="top:5.4px;left:393.0px;color:#ffff00;">5 dB/</div><div class="t" style="top:5.4px;left:428.0px;color:#ffff00;">25 dB</div><div class="t ax r" style="top:34.3px;right:573.0px;">45.00</div><div class="t ax r" style="top:72.3px;right:573.0px;">35.00</div><div class="t ax r" style="top:110.3px;right:573.0px;">25.00</div><div class="t ax r" style="top:148.3px;right:573.0px;">15.00</div><div class="t ax r" style="top:186.3px;right:573.0px;">5.000</div><div class="t bt" style="top:217.4px;left:79.0px;">Ch3: Start 1.000000000 GHz</div><div class="t bt" style="top:217.4px;left:331.0px;">RF 0.00 dBm</div><div class="t bt r" style="top:217.4px;right:6.3px;">Stop 3.500000000 GHz</div><div class="t r" style="top:28.4px;right:101.0px;color:#ffff00;">Peak to Peak</div><div class="t r" style="top:28.4px;right:10.7px;color:#ffff00;">37.19 dB</div><div class="t r" style="top:49.4px;right:101.0px;color:#ffff00;">Mean:</div><div class="t r" style="top:49.4px;right:10.7px;color:#ffff00;">33.22 dB</div><div class="t r" style="top:69.4px;right:101.0px;color:#ffff00;">Std. Dev. :</div><div class="t r" style="top:69.4px;right:10.7px;color:#ffff00;">7.55 dB</div><div class="num" style="top:215px">4</div></div><svg width="634" height="236" viewBox="0 0 634 236" style="left:0px;top:0px"><polyline points="71.0,66.7 71.8,66.7 72.5,71.0 73.2,69.3 74.0,67.5 74.8,66.5 75.5,71.7 76.2,67.3 77.0,69.0 77.8,69.0 78.5,70.0 79.2,67.8 80.0,71.6 80.8,67.8 81.5,66.5 82.2,65.8 83.0,67.6 83.8,72.2 84.5,69.5 85.2,66.3 86.0,66.1 86.8,68.8 87.5,73.0 88.2,67.0 89.0,71.4 89.8,66.0 90.5,67.5 91.2,71.1 92.0,68.3 92.8,70.4 93.5,65.1 94.2,68.9 95.0,65.9 95.8,65.2 96.5,69.4 97.2,68.0 98.0,70.5 98.8,70.2 99.5,72.6 100.2,68.9 101.0,67.3 101.8,69.1 102.5,71.5 103.2,65.4 104.0,70.1 104.8,67.6 105.5,69.0 106.2,67.1 107.0,68.3 107.8,70.5 108.5,68.9 109.2,71.7 110.0,67.3 110.8,71.1 111.5,70.9 112.2,66.8 113.0,70.7 113.8,72.0 114.5,68.8 115.2,67.7 116.0,66.6 116.8,64.1 117.5,68.1 118.2,64.4 119.0,69.9 119.8,72.2 120.5,67.0 121.2,73.5 122.0,68.6 122.8,74.0 123.5,70.9 124.2,70.2 125.0,65.9 125.8,70.6 126.5,64.5 127.2,67.0 128.0,69.8 128.8,68.9 129.5,70.3 130.2,67.7 131.0,65.4 131.8,72.2 132.5,66.9 133.2,68.9 134.0,67.9 134.8,69.0 135.5,69.0 136.2,68.6 137.0,68.9 137.8,70.4 138.5,66.2 139.2,69.3 140.0,68.2 140.8,71.1 141.5,69.4 142.2,71.3 143.0,66.4 143.8,67.4 144.5,67.4 145.2,67.3 146.0,73.1 146.8,70.4 147.5,68.2 148.2,72.1 149.0,67.2 149.8,71.4 150.5,73.8 151.2,65.9 152.0,68.7 152.8,68.3 153.5,68.7 154.2,67.9 155.0,70.2 155.8,69.5 156.5,71.2 157.2,69.8 158.0,67.9 158.8,74.7 159.5,70.5 160.2,71.1 161.0,68.7 161.8,71.3 162.5,69.1 163.2,70.7 164.0,71.3 164.8,70.3 165.5,70.5 166.2,65.5 167.0,71.6 167.8,68.0 168.5,69.3 169.2,68.0 170.0,67.6 170.8,67.7 171.5,69.6 172.2,67.0 173.0,71.2 173.8,62.3 174.5,68.9 175.2,68.8 176.0,68.0 176.8,69.1 177.5,69.7 178.2,68.2 179.0,64.3 179.8,71.1 180.5,67.9 181.2,67.0 182.0,67.5 182.8,63.5 183.5,64.7 184.2,71.9 185.0,68.6 185.8,65.9 186.5,69.8 187.2,67.3 188.0,71.2 188.8,69.6 189.5,72.6 190.2,70.7 191.0,70.3 191.8,67.3 192.5,69.9 193.2,68.0 194.0,64.8 194.8,70.9 195.5,66.4 196.2,69.1 197.0,68.2 197.8,70.8 198.5,71.7 199.2,70.6 200.0,68.9 200.8,73.1 201.5,70.1 202.2,69.3 203.0,67.7 203.8,71.8 204.5,67.1 205.2,68.0 206.0,68.4 206.8,69.8 207.5,72.2 208.2,73.8 209.0,70.1 209.8,70.2 210.5,70.4 211.2,69.7 212.0,70.8 212.8,70.2 213.5,69.2 214.2,68.0 215.0,65.9 215.8,70.1 216.5,75.6 217.2,67.3 218.0,70.3 218.8,67.6 219.5,66.9 220.2,71.4 221.0,70.9 221.8,65.8 222.5,68.4 223.2,68.9 224.0,70.0 224.8,72.1 225.5,65.9 226.0,69.5 229.0,68.0 232.0,71.0 237.2,71.0 240.0,69.5 242.0,73.0 244.8,73.2 246.0,70.0 247.5,74.0 252.2,74.8 257.0,79.8 260.1,83.2 263.5,82.6 264.4,74.2 265.4,84.5 266.3,112.6 267.4,153.0 268.4,105.1 269.5,135.1 270.4,188.6 271.6,159.5 272.3,118.2 273.2,107.0 274.4,168.0 275.1,103.2 275.9,78.9 277.0,77.0 277.8,86.4 278.5,78.0 279.4,86.4 282.2,83.6 285.1,77.0 288.2,68.6 289.8,75.1 291.6,78.9 298.2,79.2 301.9,81.7 310.4,89.2 317.0,89.2 319.8,87.3 322.6,91.0 328.2,101.4 332.0,105.7 335.7,105.1 340.8,99.4 342.9,106.2 345.6,124.1 347.7,142.0 349.3,153.7 351.1,136.5 353.2,117.2 355.5,104.2 357.7,114.5 360.1,139.2 361.4,164.0 362.5,194.3 363.5,169.5 364.9,137.9 366.9,120.0 369.7,104.2 372.0,114.5 375.2,142.0 377.0,169.5 377.9,192.9 378.9,169.5 380.3,142.0 382.8,121.4 385.8,104.2 388.3,114.5 391.7,142.0 393.5,172.3 394.5,197.0 395.4,172.3 396.5,142.0 399.3,117.2 402.4,104.2 404.8,114.5 407.5,142.0 409.6,175.0 410.4,195.6 411.4,172.3 413.0,139.2 415.5,117.2 418.2,104.2 420.6,115.9 424.0,142.0 425.4,175.0 426.1,190.1 427.0,166.8 428.4,137.9 430.9,118.6 433.4,104.2 435.7,114.5 438.5,142.0 439.8,169.5 440.5,195.6 441.5,169.5 443.0,137.9 445.3,114.5 447.4,104.2 449.5,114.5 451.2,144.8 452.5,178.5 453.6,142.0 455.7,115.9 457.7,103.5 459.4,100.1 461.2,104.2 463.2,105.8 466.0,102.8 471.3,92.2 476.0,83.5 479.3,82.2 484.6,80.9 492.6,74.2 499.2,70.9 505.8,69.6 510.0,68.0 511.0,65.4 511.8,66.8 512.5,67.4 513.2,63.1 514.0,69.9 514.8,64.0 515.5,66.3 516.2,66.9 517.0,67.7 517.8,66.7 518.5,65.6 519.2,67.1 520.0,64.5 520.8,66.8 521.5,64.7 522.2,71.9 523.0,66.7 523.8,70.0 524.5,64.8 525.2,64.5 526.0,66.1 526.8,66.7 527.5,69.4 528.2,67.1 529.0,67.6 529.8,65.4 530.5,67.9 531.2,65.7 532.0,64.3 532.8,67.4 533.5,68.0 534.2,68.8 535.0,67.7 535.8,64.6 536.5,63.9 537.2,67.9 538.0,67.7 538.8,69.3 539.5,68.8 540.2,70.8 541.0,65.0 541.8,68.1 542.5,67.5 543.2,68.5 544.0,67.9 544.8,65.2 545.5,68.8 546.2,67.2 547.0,64.3 547.8,66.7 548.5,63.2 549.2,67.5 550.0,64.8 550.8,68.7 551.5,64.7 552.2,62.1 553.0,67.7 553.8,60.8 554.5,66.7 555.2,62.8 556.0,68.4 556.8,68.2 557.5,70.5 558.2,67.3 559.0,65.2 559.8,67.4 560.5,67.1 561.2,68.4 562.0,66.2 562.8,67.3 563.5,65.3 564.2,66.7 565.0,68.9 565.8,66.4 566.5,67.2 567.2,70.2 568.0,67.4 568.8,68.0 569.5,65.1 570.2,65.0 571.0,69.1 571.8,67.7 572.5,67.4 573.2,63.2 574.0,64.8 574.8,66.9 575.5,61.8 576.2,67.7 577.0,63.8 577.8,68.4 578.5,67.2 579.2,64.4 580.0,66.5 580.8,65.6 581.5,70.4 582.2,68.3 583.0,66.3 583.8,64.8 584.5,64.8 585.2,69.8 586.0,70.5 586.8,66.8 587.5,70.2 588.2,66.7 589.0,70.5 589.8,71.7 590.5,67.9 591.2,67.3 592.0,66.6 592.8,66.1 593.5,62.2 594.2,68.7 595.0,67.8 595.8,65.0 596.5,64.4 597.2,69.9 598.0,67.0 598.8,67.3 599.5,68.3 600.2,68.6 601.0,67.9 601.8,64.4 602.5,67.1 603.2,66.8 604.0,69.0 604.8,64.4 605.5,68.4 606.2,64.8 607.0,69.8 607.8,69.2 608.5,68.9 609.2,66.5 610.0,66.7 610.8,66.9 611.5,64.6 612.2,67.4 613.0,66.6 613.8,68.6 614.5,68.8 615.2,66.4 616.0,67.2 616.8,68.5 617.5,67.7 618.2,64.0 619.0,65.0 619.8,65.8 620.5,67.0 621.2,63.4 622.0,62.5 622.8,60.8 623.5,65.5 624.2,63.8 625.0,65.6 625.8,62.5 626.5,60.7" fill="none" stroke="#ffff00" stroke-width="1.0" stroke-linejoin="round" shape-rendering="crispEdges"/><polygon points="63.5,113.5 69.5,118.0 63.5,122.5" fill="#ffff00"/></svg></div>
<div class="p" style="left:642px;top:283px;width:634px;height:236px;background:#000;"><svg width="634" height="236" viewBox="0 0 634 236" style="left:0px;top:0px"><clipPath id="smc"><circle cx="347.4" cy="116.5" r="95.6"/></clipPath><g fill="none" stroke="#6e6e6e" stroke-width="1" clip-path="url(#smc)"><circle cx="347.4" cy="116.5" r="95.0"/><line x1="252.39999999999998" y1="116.5" x2="442.4" y2="116.5"/><circle cx="363.23" cy="116.5" r="79.17"/><circle cx="379.07" cy="116.5" r="63.33"/><circle cx="394.90" cy="116.5" r="47.50"/><circle cx="410.73" cy="116.5" r="31.67"/><circle cx="423.40" cy="116.5" r="19.00"/><circle cx="433.76" cy="116.5" r="8.64"/><circle cx="437.88" cy="116.5" r="4.52"/><circle cx="442.40" cy="-358.50" r="475.00"/><circle cx="442.40" cy="591.50" r="475.00"/><circle cx="442.40" cy="-73.50" r="190.00"/><circle cx="442.40" cy="306.50" r="190.00"/><circle cx="442.40" cy="21.50" r="95.00"/><circle cx="442.40" cy="211.50" r="95.00"/><circle cx="442.40" cy="69.00" r="47.50"/><circle cx="442.40" cy="164.00" r="47.50"/><circle cx="442.40" cy="92.75" r="23.75"/><circle cx="442.40" cy="140.25" r="23.75"/><circle cx="442.40" cy="107.00" r="9.50"/><circle cx="442.40" cy="126.00" r="9.50"/><circle cx="442.40" cy="111.75" r="4.75"/><circle cx="442.40" cy="121.25" r="4.75"/></g></svg><div style="position:absolute;left:0px;top:0px;width:634px;height:236px"><div class="t os" style="top:2.4px;left:68.5px;color:#ffff00;">Tr 2</div><div class="t os" style="top:2.4px;left:103.5px;color:#ffff00;">S11</div><div class="t os" style="top:2.4px;left:129.5px;color:#ffff00;">Smith</div><div class="t os" style="top:2.4px;left:169.5px;color:#ffff00;">1 U/</div><div class="t os" style="top:2.4px;left:199.5px;color:#ffff00;">1 U</div><div class="t bt os" style="top:213.9px;left:77.0px;">Ch2: Start 100.000 kHz</div><div class="t bt os" style="top:213.9px;left:315.0px;">RF 0.00 dBm</div><div class="t bt os r" style="top:213.9px;right:8.0px;">Stop 8.500000000 GHz</div><div class="t os r" style="top:24.4px;right:102.0px;color:#ffff00;"><span style="letter-spacing:0.9px">&gt;</span> 1:   4.250050 GHz</div><div class="t os r" style="top:24.4px;right:12.0px;color:#ffff00;">48.42 Ω</div><div class="t os r" style="top:42.4px;right:102.0px;color:#ffff00;">21.56 pF</div><div class="t os r" style="top:42.4px;right:12.0px;color:#ffff00;">-1.74 Ω</div><div class="t ml" style="left:341.2px;top:83.2px;color:#ffff00">1</div><div class="num" style="top:215px">3</div></div><svg width="634" height="236" viewBox="0 0 634 236" style="left:0px;top:0px"><polygon points="345.0,117.0 350.8,108.6 345.0,100.2 339.2,108.6" fill="#000" stroke="#ffff00" stroke-width="1.2"/><polygon points="349.3,112.4 343.8,118 346.8,120.4 350,118.6" fill="#ffff00"/></svg></div>
<div class="p" style="left:4px;top:523px;width:634px;height:238px;background:#02020d;border:1px solid #737373;"><svg width="634" height="238" viewBox="0 0 634 238" style="left:-1px;top:-1px"><g fill="#3e3e3e"><rect x="71" y="23" width="1" height="192"/><rect x="126" y="23" width="1" height="192"/><rect x="182" y="23" width="1" height="192"/><rect x="237" y="23" width="1" height="192"/><rect x="293" y="23" width="1" height="192"/><rect x="349" y="23" width="1" height="192"/><rect x="404" y="23" width="1" height="192"/><rect x="460" y="23" width="1" height="192"/><rect x="515" y="23" width="1" height="192"/><rect x="571" y="23" width="1" height="192"/><rect x="626" y="23" width="1" height="192"/><rect x="71" y="23" width="556" height="1"/><rect x="71" y="42" width="556" height="1"/><rect x="71" y="61" width="556" height="1"/><rect x="71" y="80" width="556" height="1"/><rect x="71" y="99" width="556" height="1"/><rect x="71" y="119" width="556" height="1"/><rect x="71" y="138" width="556" height="1"/><rect x="71" y="157" width="556" height="1"/><rect x="71" y="176" width="556" height="1"/><rect x="71" y="195" width="556" height="1"/><rect x="71" y="214" width="556" height="1"/></g><rect x="71" y="4" width="30" height="16" fill="#ffff00"/></svg><div style="position:absolute;left:-1px;top:-1px;width:634px;height:238px"><div class="t" style="top:5.4px;left:72.0px;color:#000;text-shadow:none;">Tr 1</div><div class="t" style="top:5.4px;left:106.0px;color:#ffff00;">S21</div><div class="t" style="top:5.4px;left:134.0px;color:#ffff00;">Delay</div><div class="t" style="top:5.4px;left:172.0px;color:#ffff00;">2 ns/</div><div class="t" style="top:5.4px;left:205.5px;color:#ffff00;">18 ns</div><div class="t ax r" style="top:34.4px;right:573.0px;">26.00 n</div><div class="t ax r" style="top:72.6px;right:573.0px;">22.00 n</div><div class="t ax r" style="top:110.8px;right:573.0px;">18.00 n</div><div class="t ax r" style="top:149.0px;right:573.0px;">14.00 n</div><div class="t ax r" style="top:187.2px;right:573.0px;">10.00 n</div><div class="t bt" style="top:219.4px;left:71.0px;">&gt;Ch4: Start 2.280000000 GHz</div><div class="t bt" style="top:219.4px;left:331.0px;">RF 0.00 dBm</div><div class="t bt r" style="top:219.4px;right:6.3px;">Stop 2.700000000 GHz</div><div class="t" style="top:219.4px;left:25.0px;color:#000;text-shadow:none;">Max</div><div class="t r" style="top:28.4px;right:101.0px;color:#ffff00;">Peak to Peak</div><div class="t r" style="top:28.4px;right:10.7px;color:#ffff00;">5.92 ns</div><div class="t r" style="top:49.4px;right:101.0px;color:#ffff00;">Mean:</div><div class="t r" style="top:49.4px;right:10.7px;color:#ffff00;">14.65 ns</div><div class="t r" style="top:69.4px;right:101.0px;color:#ffff00;">Std. Dev. :</div><div class="t r" style="top:69.4px;right:10.7px;color:#ffff00;">1.33 ns</div><div class="t r" style="top:90.4px;right:101.0px;color:#ffff00;"><span style="letter-spacing:0.9px">&gt;</span> 1:  2.514965 GHz</div><div class="t r" style="top:90.4px;right:10.7px;color:#ffff00;">13.71508 ns</div><div class="t ml" style="left:377.3px;top:127.4px;color:#ffff00">1</div><div class="num" style="top:217px;left:0px;width:21px;background:#8c8c8c;color:#333;border-color:#8c8c8c">5</div></div><svg width="634" height="238" viewBox="0 0 634 238" style="left:-1px;top:-1px"><polyline points="71.0,118.5 78.5,118.5 83.0,120.6 87.5,125.4 92.0,131.1 99.5,138.0 110.0,144.0 114.5,146.1 126.5,149.1 134.0,150.0 143.0,152.4 155.0,154.2 164.0,155.1 179.0,155.7 188.0,156.6 195.5,156.6 206.0,158.4 219.5,161.1 239.0,161.4 251.0,159.6 261.5,159.6 264.5,160.5 346.5,160.5 347.5,161.5 373.5,161.5 374.5,160.4 380.0,160.4 381.0,159.6 391.0,159.6 392.0,158.4 424.0,158.4 425.0,157.5 435.0,157.5 437.0,156.7 463.0,156.0 484.0,153.6 511.0,150.9 541.0,147.9 571.0,139.5 589.0,135.0 605.5,126.6 616.0,118.5 626.5,105.6" fill="none" stroke="#ffff00" stroke-width="1.0" stroke-linejoin="round" shape-rendering="crispEdges"/><polygon points="63.5,114.0 69.5,118.5 63.5,123.0" fill="#ffff00"/><polygon points="381.0,158.5 386.0,151.1 381.0,143.7 376.0,151.1" fill="#ffff00" stroke="#ffff00" stroke-width="1.2"/></svg></div>
<div class="p" style="left:642px;top:523px;width:634px;height:238px;background:#000;"><svg width="634" height="238" viewBox="0 0 634 238" style="left:0px;top:0px"><g fill="#3e3e3e"><rect x="71" y="23" width="1" height="192"/><rect x="126" y="23" width="1" height="192"/><rect x="182" y="23" width="1" height="192"/><rect x="237" y="23" width="1" height="192"/><rect x="293" y="23" width="1" height="192"/><rect x="349" y="23" width="1" height="192"/><rect x="404" y="23" width="1" height="192"/><rect x="460" y="23" width="1" height="192"/><rect x="515" y="23" width="1" height="192"/><rect x="571" y="23" width="1" height="192"/><rect x="626" y="23" width="1" height="192"/><rect x="71" y="23" width="556" height="1"/><rect x="71" y="42" width="556" height="1"/><rect x="71" y="61" width="556" height="1"/><rect x="71" y="80" width="556" height="1"/><rect x="71" y="99" width="556" height="1"/><rect x="71" y="119" width="556" height="1"/><rect x="71" y="138" width="556" height="1"/><rect x="71" y="157" width="556" height="1"/><rect x="71" y="176" width="556" height="1"/><rect x="71" y="195" width="556" height="1"/><rect x="71" y="214" width="556" height="1"/></g></svg><div style="position:absolute;left:0px;top:0px;width:634px;height:238px"><div class="t" style="top:5.4px;left:71.0px;color:#ffff00;">Tr 5</div><div class="t" style="top:5.4px;left:106.0px;color:#ffff00;">S21</div><div class="t" style="top:5.4px;left:134.0px;color:#ffff00;">Phase</div><div class="t" style="top:5.4px;left:175.5px;color:#ffff00;">50 °/</div><div class="t" style="top:5.4px;left:207.5px;color:#ffff00;">50 °</div><div class="t ax r" style="top:34.4px;right:573.0px;">250.0</div><div class="t ax r" style="top:72.6px;right:573.0px;">150.0</div><div class="t ax r" style="top:110.8px;right:573.0px;">50.00</div><div class="t ax r" style="top:149.0px;right:573.0px;">-50.00</div><div class="t ax r" style="top:187.2px;right:573.0px;">-150.0</div><div class="t bt" style="top:219.4px;left:79.0px;">Ch4: Start 2.280000000 GHz</div><div class="t bt" style="top:219.4px;left:331.0px;">RF 0.00 dBm</div><div class="t bt r" style="top:219.4px;right:6.3px;">Stop 2.700000000 GHz</div><div class="t r" style="top:24.4px;right:101.0px;color:#ffff00;"><span style="letter-spacing:0.9px">&gt;</span> 1:  2.424895 GHz</div><div class="t r" style="top:24.4px;right:10.7px;color:#ffff00;">141.49 °</div><div class="t ml" style="left:258.2px;top:52.2px;color:#ffff00">1</div><div class="num" style="top:217px">6</div></div><svg width="634" height="238" viewBox="0 0 634 238" style="left:0px;top:0px"><polyline points="71.5,205.5 73.0,153.0 75.4,111.0 77.5,78.0 91.0,105.0 127.0,160.5 154.0,203.4 157.0,153.0 159.1,96.0 160.6,73.5 166.0,84.0 208.0,144.0 249.4,201.6 251.5,153.0 253.6,87.0 254.3,72.0 262.0,84.5 318.0,162.0 349.5,206.4 351.0,165.0 353.4,96.0 354.6,76.5 363.0,87.0 405.0,147.0 443.4,204.0 445.5,147.0 447.6,87.0 448.8,74.4 459.0,90.0 498.0,147.0 532.5,199.5 534.6,147.0 537.0,81.0 537.9,69.9 546.0,84.0 573.0,126.0 615.0,202.5 617.1,147.0 618.9,87.0 620.4,75.0 627.0,86.4" fill="none" stroke="#ffff00" stroke-width="1.0" stroke-linejoin="round" shape-rendering="crispEdges"/><polygon points="63.5,114.0 69.5,118.5 63.5,123.0" fill="#ffff00"/><polygon points="262.0,84.5 268.0,75.8 262.0,67.1 256.0,75.8" fill="none" stroke="#ffff00" stroke-width="1.2"/></svg></div>
<div id="status"><div class="st" style="left:10px;">Tr 1</div><div class="st" style="left:59px;">Ch 4</div><div class="st" style="left:113px;">IntTrig</div><div class="st" style="left:176px;">Continuous</div><div class="st" style="left:268px;">BW=10 k</div><div class="st" style="left:345px;">No Cor</div><div class="st" style="left:413px;color:#5e5e5e;">SrcCal</div><div class="st" style="left:478px;">RF On</div><div class="st" style="left:541px;">IntRef</div><div class="st" style="left:602px;">Update On</div><div class="st" style="left:698px;color:#6e6e6e;">no messages</div><div class="st" style="left:1170.6px;">2020-11-10 17:46</div><div style="position:absolute;left:679px;top:7px;width:1px;height:23px;background:#333"></div><div style="position:absolute;left:1151px;top:7px;width:1px;height:23px;background:#333"></div></div>
</body></html>
